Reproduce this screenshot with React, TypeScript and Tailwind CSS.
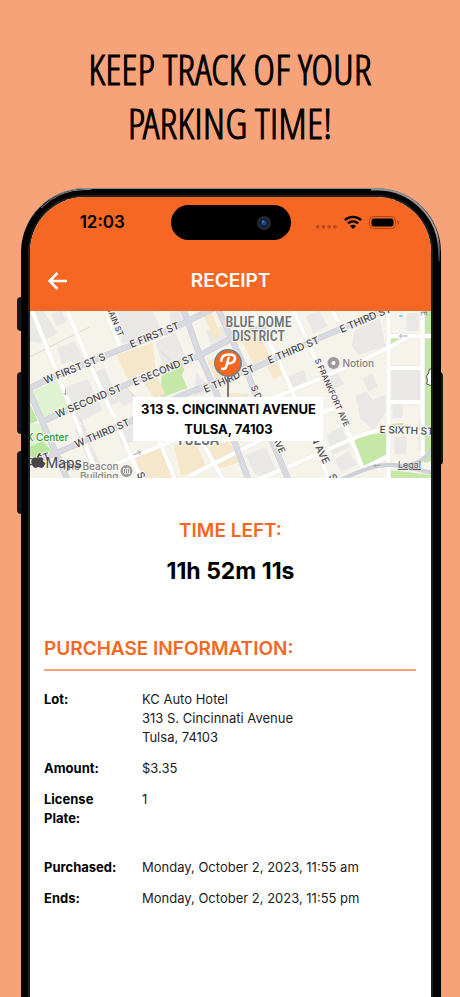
import { clsx } from 'clsx';

interface MapLabel {
  text: string;
  x: number;
  y: number;
  angle: number;
  size?: number;
}

interface ReceiptRow {
  label: string;
  lines: string[];
  spaced?: boolean;
}

const RECEIPT_ROWS: ReceiptRow[] = [
  {
    label: 'Lot:',
    lines: ['KC Auto Hotel', '313 S. Cincinnati Avenue', 'Tulsa, 74103'],
  },
  { label: 'Amount:', lines: ['$3.35'] },
  { label: 'License Plate:', lines: ['1'] },
  {
    label: 'Purchased:',
    lines: ['Monday, October 2, 2023, 11:55 am'],
    spaced: true,
  },
  { label: 'Ends:', lines: ['Monday, October 2, 2023, 11:55 pm'] },
];

const STREET_LABELS: MapLabel[] = [
  { text: 'W FIRST ST S', x: 16, y: 73, angle: -22 },
  { text: 'E FIRST ST', x: 102, y: 37, angle: -22 },
  { text: 'W SECOND ST', x: 28, y: 107, angle: -23 },
  { text: 'E SECOND ST', x: 105, y: 75, angle: -23 },
  { text: 'W THIRD ST', x: 47, y: 137, angle: -23 },
  { text: 'E THIRD ST', x: 176, y: 82, angle: -24 },
  { text: 'E THIRD ST', x: 240, y: 53, angle: -23 },
  { text: 'E THIRD ST', x: 312, y: 22, angle: -23 },
  { text: 'MAIN ST', x: 76, y: -5, angle: 67, size: 8 },
  { text: 'S FRANKFORT AVE', x: 285, y: 49, angle: 66, size: 8 },
  { text: 'S DETROIT', x: 221, y: 76, angle: 66, size: 9 },
  { text: 'AVE', x: 243, y: 127, angle: 66, size: 9 },
  { text: 'N AVE', x: 281, y: 127, angle: 64 },
  { text: 'S', x: 299, y: 165, angle: 64 },
  { text: 'S', x: 107, y: 163, angle: 64 },
  { text: 'E SIXTH ST', x: 350, y: 122, angle: 2 },
  { text: 'RD ST', x: -7, y: 157, angle: -18 },
];

const BUILDINGS = [
  'M0 0h14l14 22-17 10L0 30z',
  'M22 3l10-4 5 12-10 4z',
  'M28 37l17-7 5 10 6 12-10 4-4-6-10 3z',
  'M34 77l24-9 15 31-23 12z',
  'M66 61l9-4 15 34-9 4z',
  'M45 118l8-4 20 44-9 3z',
  'M88 0h35l10 22-40 11z',
  'M94 73l15 15-15 7-13-16z',
  'M86 117l19-8 7 18-19 8z',
  'M126 31l20-9 14 32-25 6z',
  'M140 2l12-3 6 12-17 6z',
  'M167 62l17 18-20 6z',
  'M177 20l18-5 5 13-18 8z',
  'M157 136l12 2 8 18-15 6z',
  'M200 87l18-5 10 30h-18z',
  'M216 144l20-8 13 28h-23z',
  'M246 98l20-8 14 30-22 10z',
  'M256 67l18-8 4 11-18 8z',
  'M276 5l14-5 8 15-14 7z',
  'M296 67l12-5 7 11-11 5z',
  'M325 20l25-13 6 28-27 9-7-9z',
  'M333 67l10-4 5 12-9 6z',
  'M326 85l11-5 6 9 13-6v19l-12 17-13-11z',
  'M297 123l15-7 8 20-17 8z',
  'M305 148l14-7 9 13-16 7z',
  'M377 2h12v18h-12z',
  'M362 59h29v30h-29z',
  'M363 93h10v14h-10z',
  'M365 126h12v17h-12z',
];

const TAN_BUILDINGS = [
  'M87 44l36-12 3 25-28 11z',
  'M113 69l13-6 10 20-12 4z',
  'M174 4l8-3 10 24-8 3z',
  'M178 50l14-6 12 28-14 6z',
  'M211 28l18-8 11 26-16 7z',
  'M238 56l12-5 5 12-11 5z',
  'M197 82h14l6 20h-18z',
  'M106 147l27-12 10 29-30 5z',
  'M144 134l22-3 10 24-24 11z',
  'M178 134l22-3 10 20-24 8z',
  'M130 160l13-4 6 11h-18z',
];

const MAJOR_ROADS = [
  'M-4 79L17 69 77 44 100 35 140 19 185-3',
  'M13 111L27 104 93 75 140 56 167 46 203 27 236 15',
  'M-4 154L27 142 103 109 153 84 227 56 290 27 360-3',
  'M-2 76L13 111 38 169',
  'M154-2L170 44 185 77 219 169',
  'M188-3L220 67 243 131 259 169',
];

const MINOR_ROADS = [
  'M2-2L33 76 70 169',
  'M37-2L62 57 82 101 112 169',
  'M75-3L91 37',
  'M222-2L250 51 263 81 300 169',
  'M263-3L290 57 320 124 335 162',
  'M302-2L313 19',
  'M359-2V169',
  'M393-2V145',
  'M359 25H404',
  'M380 25L359 37 333 49 280 72 230 93',
  'M359 57H393',
  'M359 91H393',
  'M305 97L270 109 160 165',
  'M78 156L140 131 165 120',
  'M122 110L145 167',
  'M162 112L194 169',
  'M225 170L270 151 320 129Q340 119 359 119L404 122',
  'M333 158L359 145',
];

function StreetMap() {
  return (
    <svg
      viewBox="0 0 402 167"
      preserveAspectRatio="xMidYMid slice"
      className="absolute inset-0 h-full w-full font-['Inter',sans-serif]"
      role="img"
      aria-label="Map of downtown Tulsa"
    >
      <rect width="402" height="167" fill="#f6f3eb" />
      <path
        d="M2 81l26-12 11 27-26 13zM0 112l11 1 12 27-23 9z"
        fill="#dff3d3"
      />
      <path d="M0 92l8 18-8 3zM0 136l13-6 9 10-22 9z" fill="#bce5a0" />
      <path
        d="M132 65l21-11 2 5-3 5 6 13-27 10zM323 129l29-9 5 2v23l-24 13zM395 0h7v150l-8 2zM361 27h18l-18 8zM361 159l41 5v4h-41zM362 113l12-1v3h-12zM390 108h4v32h-4z"
        fill="#c6e8a7"
      />
      <path d={BUILDINGS.join('')} fill="#eae8e6" />
      <path d={TAN_BUILDINGS.join('')} fill="#f7e7ca" />
      <path
        d="M0 46L60 16M94 73l22 26M62 57l20 40M131 40l12 12M50 106l6 14"
        fill="none"
        stroke="#dcd9d6"
        strokeWidth="1"
      />

      <g fill="none" strokeLinejoin="round">
        <path d={MINOR_ROADS.join('')} stroke="#ebe8e3" strokeWidth="5" />
        <path d={MINOR_ROADS.join('')} stroke="#fff" strokeWidth="4" />
        <path d={MAJOR_ROADS.join('')} stroke="#c9cbd1" strokeWidth="6" />
        <path d={MAJOR_ROADS.join('')} stroke="#d8dae1" strokeWidth="5" />
        <path
          d="M305 172Q325 162 340 157T372 155L404 162M372 155Q393 154 403 137"
          stroke="#cfd1d8"
          strokeWidth="4"
        />
      </g>
      <path
        d="M36 78v6l-2-2m2 2l2-2M104 144l7-3-3-1m3 1l-1 3M378 25h-8l2-2m-2 2l2 2M351 154l-7 1 2-2m-2 2l3 1"
        fill="none"
        stroke="#aaa9ad"
      />
      <rect x="370" y="4" width="3" height="2" fill="#6fd0f2" />

      <g
        fill="#47464a"
        stroke="#f8f6f1"
        strokeWidth="2"
        paintOrder="stroke"
        fontWeight="500"
      >
        {STREET_LABELS.map((label) => (
          <text
            key={`${label.text}-${label.x}`}
            fontSize={label.size ?? 10}
            transform={`translate(${label.x} ${label.y}) rotate(${label.angle})`}
          >
            {label.text}
          </text>
        ))}
      </g>

      <g
        fill="#6c7377"
        stroke="#f8f6f1"
        strokeWidth="2"
        paintOrder="stroke"
        fontWeight="500"
        textAnchor="middle"
        className="font-['Roboto_Condensed','Liberation_Sans_Narrow','Open_Sans',sans-serif]"
      >
        <text x="229" y="16" fontSize="14">
          BLUE DOME
        </text>
        <text x="229" y="30" fontSize="14">
          DISTRICT
        </text>
        <text x="168" y="134" fontSize="16">
          TULSA
        </text>
      </g>

      <circle cx="304" cy="52" r="6" fill="#9c9a9a" />
      <circle cx="304" cy="52" r="2" fill="#fff" />
      <g stroke="#f8f6f1" strokeWidth="2" paintOrder="stroke" fontWeight="500">
        <text x="313" y="56" fontSize="10" fill="#858383">
          Notion
        </text>
        <text x="-3" y="130" fontSize="10" fill="#2e9b2e">
          K Center
        </text>
        <g fontSize="10" fill="#858383" textAnchor="end">
          <text x="89" y="159">
            The Beacon
          </text>
          <text x="89" y="169">
            Building
          </text>
        </g>
      </g>
      <circle cx="97" cy="160" r="6" fill="#9c9a9a" />
      <path
        d="M94 157l2 1 2-1 2 1v5l-2-1-2 1-2-1zM96 158v5m2-6v5"
        fill="none"
        stroke="#e8e6e4"
      />

      {/* Apple Maps mark */}
      <path
        d="M14 148c-1-2-4-2-6-1-2-1-5-1-6 2-1 4 2 8 4 8l3-1 3 1c2 0 3-3 4-5-3-1-3-3-2-4zM8 146c0-2 1-4 3-4 0 2-1 4-3 4z"
        fill="#47464a"
      />
      <text x="16" y="157" fontSize="14" fill="#47464a">
        Maps
      </text>
      <text x="391" y="0" fontSize="8" fill="#6c6c70" transform="rotate(90 391 0)">
        E
      </text>
      <path
        d="M403 58h-3l-1 4-2 3 1 5-1 3 3 1 3 1z"
        fill="#fff"
        stroke="#55545a"
      />
    </svg>
  );
}

function LotPin() {
  return (
    <div className="absolute top-[37px] left-[49.5%] flex w-[190px] -translate-x-1/2 flex-col items-center">
      <svg width="30" height="49" viewBox="0 0 30 49" aria-hidden="true">
        <path d="M15 28v21" stroke="#777b7d" strokeWidth="2" />
        <circle cx="15" cy="15" r="13.2" fill="#f46622" stroke="#6f8084" strokeWidth="1.500" />
        <path
          d="M8.400 12.800C8.200 8.500 11.500 6.600 16 6.600c4.600 0 6.500 1.400 6 4.100-.5 2.900-3.300 4.700-7 4.700M15.600 9.800c-1 3-1.500 6-2.400 8.800-.6 1.800-2 2.600-4 2.200"
          fill="none"
          stroke="#fff"
          strokeWidth="2.500"
          strokeLinecap="round"
          strokeLinejoin="round"
        />
      </svg>
      <p className="w-full bg-white py-[2px] text-center text-[13px] leading-5 font-bold whitespace-nowrap">
        313 S. CINCINNATI AVENUE
        <br />
        TULSA, 74103
      </p>
    </div>
  );
}

function StatusBar() {
  return (
    <div className="grid h-[54px] grid-cols-[1fr_120px_1fr] pt-2">
      <div className="flex h-[35px] items-center justify-center pl-1 text-[17px] font-semibold">
        12:03
      </div>
      <div className="flex h-[35px] items-center justify-end rounded-full bg-black pr-5">
        <svg width="14" height="14" viewBox="0 0 14 14" aria-hidden="true">
          <circle cx="7" cy="7" r="7" fill="#24282c" />
          <circle cx="7" cy="7" r="4" fill="#0d1c3c" />
          <circle cx="7" cy="7" r="2.500" fill="#174a8c" />
          <circle cx="6" cy="5.500" r="1" fill="#4f93d6" />
        </svg>
      </div>
      <div className="flex h-[35px] items-center justify-center pr-[6px]">
        <svg
          width="84"
          height="16"
          viewBox="0 0 84 16"
          role="img"
          aria-label="Signal, Wi-Fi and battery"
        >
          <g fill="#b74d1a">
            <rect x="0" y="10" width="3.500" height="3.500" rx="1.500" />
            <rect x="5.700" y="10" width="3.500" height="3.500" rx="1.500" />
            <rect x="11.400" y="10" width="3.500" height="3.500" rx="1.500" />
            <rect x="17.100" y="10" width="3.500" height="3.500" rx="1.500" />
          </g>
          <g fill="none" stroke="#000" strokeWidth="2.400">
            <path d="M28.900 5.100a11.700 11.700 0 0 1 16.200 0" />
            <path d="M31.900 8.400a7.400 7.400 0 0 1 10.200 0" />
          </g>
          <path d="M37 14l-3-3a4.200 4.200 0 0 1 6 0z" />
          <rect x="53.500" y="1.500" width="26" height="12" rx="4" fill="none" stroke="#a84718" />
          <rect x="55.500" y="3.500" width="22" height="8" rx="2.500" />
          <path d="M81.500 5.500v4c2-.6 2-3.400 0-4z" fill="#a84718" />
        </svg>
      </div>
    </div>
  );
}

function NavBar() {
  return (
    <div className="grid h-[60px] grid-cols-[1fr_auto_1fr] items-center px-[18px] text-white">
      <button type="button" aria-label="Back" className="justify-self-start">
        <svg width="20" height="20" viewBox="0 0 20 20" aria-hidden="true">
          <path
            d="M9.500 2L1.500 10l8 8M2 10h17"
            fill="none"
            stroke="currentColor"
            strokeWidth="2.600"
          />
        </svg>
      </button>
      <h2 className="text-[19px] leading-7 font-semibold">RECEIPT</h2>
    </div>
  );
}

function SideButton({ className }: { className?: string }) {
  return <div className={clsx('w-1 bg-[#16191a]', className)} />;
}

export default function App() {
  return (
    <main className="flex min-h-screen flex-col bg-[#f7a37a] font-['Inter',sans-serif] text-black">
      <h1 className="px-4 pt-[42px] pb-[38px] text-center font-['Open_Sans_Condensed_Light','Roboto_Condensed',sans-serif] text-[42px] leading-[54px] [-webkit-text-stroke:1px_black]">
        KEEP TRACK OF YOUR
        <br />
        PARKING TIME!
      </h1>

      <div className="relative mr-[19px] ml-[21px] flex flex-1 flex-col">
        {/* hardware buttons */}
        <div className="absolute top-[109px] -left-1 flex flex-col">
          <SideButton className="h-[34px] rounded-l-sm" />
          <SideButton className="mt-[41px] h-[62px] rounded-l-sm" />
          <SideButton className="mt-[17px] h-[63px] rounded-l-sm" />
        </div>
        <div className="absolute top-[184px] -right-[2px]">
          <SideButton className="h-[93px] rounded-r-sm" />
        </div>

        <div className="relative flex flex-1 flex-col rounded-t-[64px] border-t border-[#8d8b89] bg-black pt-[6px] pr-2 pl-[7px]">
          {/* light catching the metal rim */}
          <svg
            className="absolute -top-px right-0"
            width="70"
            height="76"
            viewBox="0 0 70 76"
            fill="none"
            aria-hidden="true"
          >
            <path
              d="M0 1.500h6a62 62 0 0 1 62 62v10"
              stroke="url(#rim)"
              strokeWidth="2"
            />
            <defs>
              <linearGradient id="rim" x1="0" y1="0" x2="0" y2="1">
                <stop offset="0" stopColor="#8f8f90" />
                <stop offset="0.6" stopColor="#a5a5a6" />
                <stop offset="1" stopColor="#222" />
              </linearGradient>
            </defs>
          </svg>
          <svg
            className="absolute -top-px left-0"
            width="70"
            height="76"
            viewBox="0 0 70 76"
            fill="none"
            aria-hidden="true"
          >
            <path d="M70 1.500h-6A62 62 0 0 0 20 20" stroke="#7d8889" />
          </svg>
          <div className="relative flex flex-1 flex-col overflow-hidden rounded-t-[57px] border-x-2 border-t-2 border-[#1d1f20] bg-white">
            <header className="bg-[#f56722]">
              <StatusBar />
              <NavBar />
            </header>

            <div className="relative h-[167px] overflow-hidden">
              <StreetMap />
              <LotPin />
              <a
                href="#legal"
                className="absolute right-[10px] bottom-[7px] text-[9px] leading-3 text-[#5c5b5e] underline"
              >
                Legal
              </a>
            </div>

            <section className="pt-[39px] text-center">
              <h3 className="text-[19px] leading-7 font-semibold text-[#f56722]">
                TIME LEFT:
              </h3>
              <p className="mt-[10px] text-[23px] leading-8 font-bold">
                11h 52m 11s
              </p>
            </section>

            <section className="mt-12 pr-[15px] pb-8 pl-[14px]">
              <h3 className="border-b-2 border-[#f9a27a] pb-[6px] text-[19px] leading-7 font-semibold text-[#f56722]">
                PURCHASE INFORMATION:
              </h3>
              <dl className="mt-[19px] flex flex-col gap-3 text-[13px] leading-[19px]">
                {RECEIPT_ROWS.map((row) => (
                  <div
                    key={row.label}
                    className={clsx('flex', row.spaced && 'mt-[18px]')}
                  >
                    <dt className="w-[98px] shrink-0 pr-4 font-bold">
                      {row.label}
                    </dt>
                    <dd className="text-[#1c1c1c]">
                      {row.lines.map((line) => (
                        <span key={line} className="block">
                          {line}
                        </span>
                      ))}
                    </dd>
                  </div>
                ))}
              </dl>
            </section>
          </div>
        </div>
      </div>
    </main>
  );
}
